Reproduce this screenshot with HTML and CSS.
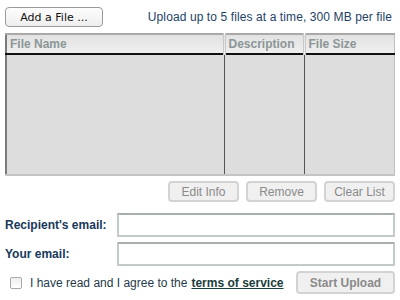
FILE: index.html
```html
<!DOCTYPE html>
<html lang="en">
<head>
    <meta charset="UTF-8">
    <title>Upload Files</title>
    <link rel="stylesheet" href="styles.css">
</head>
<body>
    <div class="uploader">
        <div class="top-bar">
            <button type="button" class="btn">Add a File ...</button>
            <span class="limits">Upload up to 5 files at a time, 300 MB per file</span>
        </div>
        <table class="files">
            <thead>
                <tr>
                    <th class="col-name">File Name</th>
                    <th class="col-desc">Description</th>
                    <th class="col-size">File Size</th>
                </tr>
            </thead>
            <tbody>
                <tr>
                    <td></td>
                    <td></td>
                    <td></td>
                </tr>
            </tbody>
        </table>
        <div class="list-actions">
            <button type="button" class="btn btn-small" disabled>Edit Info</button>
            <button type="button" class="btn btn-small" disabled>Remove</button>
            <button type="button" class="btn btn-small" disabled>Clear List</button>
        </div>
        <form class="details">
            <label class="row">
                <span class="label">Recipient's email:</span>
                <input type="text" name="to">
            </label>
            <label class="row">
                <span class="label">Your email:</span>
                <input type="text" name="from">
            </label>
            <div class="bottom-bar">
                <label class="agree">
                    <span class="box"></span>
                    I have read and I agree to the <a href="#">terms of service</a>
                </label>
                <button type="button" class="btn btn-start" disabled>Start Upload</button>
            </div>
        </form>
    </div>
</body>
</html>
```

FILE: styles.css
```css
* {
    margin: 0;
    padding: 0;
    box-sizing: border-box;
}
body {
    background: #fff;
    font-family: "Liberation Sans", Arial, sans-serif;
    font-size: 12px;
}
.uploader {
    width: 400px;
    padding: 7px 5px 0 5px;
}
.top-bar {
    display: flex;
    justify-content: space-between;
    align-items: center;
    height: 20px;
}
.limits {
    color: #1d3f66;
    font-size: 12px;
    letter-spacing: 0.1px;
    padding-right: 3px;
}
.btn {
    font-family: "DejaVu Sans", sans-serif;
    font-size: 11px;
    color: #111;
    background: linear-gradient(#fdfdfd, #eeeeee);
    border: 1px solid #9a9a9a;
    border-radius: 4px;
    height: 20px;
    width: 98px;
}
.btn:disabled {
    color: #8a8a8a;
    border: 2px solid #d3d3d3;
    background: #f0f0f0;
}
.files {
    width: 390px;
    margin-top: 6px;
    border-collapse: collapse;
    table-layout: fixed;
    border-top: 2px solid #a9a9a9;
    border-left: 2px solid #7a7a7a;
    border-right: 1px solid #c0c0c0;
    border-bottom: 2px solid #c4c4c4;
}
.files th {
    height: 20px;
    text-align: left;
    font-weight: bold;
    color: #8b9696;
    padding: 0 3px;
    background: linear-gradient(#e2e2e2, #efefef);
    border-bottom: 2px solid #111;
    border-left: 3px double #c8c8c8;
}
.files th.col-name {
    border-left: none;
}
.col-name {
    width: 218px;
}
.col-desc {
    width: 80px;
}
.files td {
    height: 121px;
    background: #dddddd;
    border-left: 1px solid #555;
}
.files td:first-child {
    border-left: none;
}
.list-actions {
    display: flex;
    justify-content: flex-end;
    gap: 7px;
    margin-top: 5px;
}
.btn-small {
    width: 71px;
    height: 21px;
    font-size: 12px;
    font-family: "Liberation Sans", Arial, sans-serif;
}
.details {
    margin-top: 11px;
}
.row {
    display: flex;
    align-items: center;
    height: 24px;
    margin-bottom: 5px;
}
.label {
    width: 112px;
    font-weight: bold;
    color: #17385a;
}
.row input {
    width: 278px;
    height: 24px;
    border: 2px solid #c4cac8;
    border-top-color: #a8aeac;
    background: #fff;
}
.bottom-bar {
    display: flex;
    justify-content: space-between;
    align-items: center;
    margin-top: 3px;
}
.agree {
    display: flex;
    align-items: center;
    color: #1f3a4a;
    padding-left: 5px;
}
.agree .box {
    width: 12px;
    height: 12px;
    border: 1px solid #a8a8a8;
    border-radius: 2px;
    background: linear-gradient(#eeeeee, #ffffff);
    margin-right: 8px;
}
.agree a {
    color: #1b3d3d;
    font-weight: bold;
    margin-left: 4px;
}
.btn-start {
    width: 99px;
    height: 23px;
    font-weight: bold;
    font-size: 12px;
    font-family: "Liberation Sans", Arial, sans-serif;
}
```
